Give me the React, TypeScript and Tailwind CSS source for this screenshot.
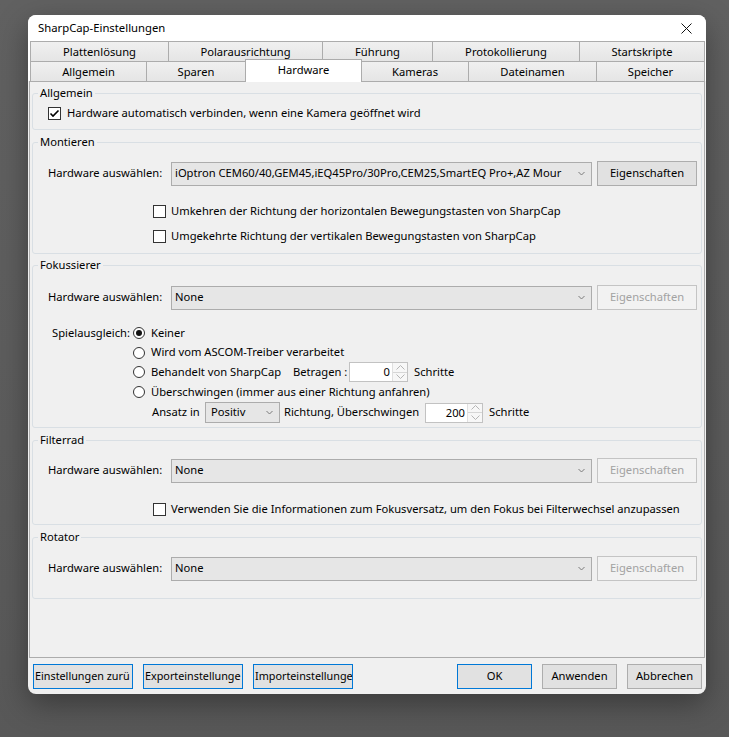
import React from "react";

function Chevron() {
  return (
    <svg width="7" height="5" viewBox="0 0 7 5" className="shrink-0">
      <path d="M0.5 1 L3.5 4 L6.5 1" fill="none" stroke="#7a7a7a" strokeWidth="1" />
    </svg>
  );
}

function Checkbox({ checked }: { checked?: boolean }) {
  return (
    <div className="w-[13px] h-[13px] border border-[#333333] bg-white shrink-0 flex items-center justify-center">
      {checked && (
        <svg width="11" height="11" viewBox="0 0 11 11">
          <path d="M1.5 5.5 L4 8 L9.5 2.5" fill="none" stroke="#000" strokeWidth="1.6" />
        </svg>
      )}
    </div>
  );
}

function Radio({ checked }: { checked?: boolean }) {
  return (
    <div className="w-[12px] h-[12px] rounded-full border border-[#333333] bg-white shrink-0 flex items-center justify-center">
      {checked && <div className="w-[6px] h-[6px] rounded-full bg-[#111111]" />}
    </div>
  );
}

function Combo({ text }: { text: string }) {
  return (
    <div className="h-[24px] w-[421px] shrink-0 border border-[#acacac] bg-[#e6e6e6] flex items-center pl-[3px] pr-[6px]">
      <span className="flex-1 overflow-hidden whitespace-nowrap">{text}</span>
      <div className="w-[8px]" />
      <Chevron />
    </div>
  );
}

function PropButton({ enabled }: { enabled?: boolean }) {
  return enabled ? (
    <div className="ml-[5px] h-[25px] w-[100px] shrink-0 border border-[#adadad] bg-[#e1e1e1] flex items-center justify-center text-black">
      Eigenschaften
    </div>
  ) : (
    <div className="ml-[5px] h-[25px] w-[100px] shrink-0 border border-[#c4c4c4] bg-[#f2f2f2] flex items-center justify-center text-[#a2a2a2]">
      Eigenschaften
    </div>
  );
}

function HwRow({ text, enabled, mt }: { text: string; enabled?: boolean; mt: string }) {
  return (
    <div className={`flex items-center h-[25px] pl-[15px] ${mt}`}>
      <span className="w-[123px] shrink-0">Hardware auswählen:</span>
      <Combo text={text} />
      <PropButton enabled={enabled} />
    </div>
  );
}

function Spinner({ value, w }: { value: string; w: string }) {
  return (
    <div className={`h-[20px] ${w} shrink-0 border border-[#c2c2c2] bg-white flex items-stretch`}>
      <div className="flex-1 text-right pr-[2px] leading-[18px]">{value}</div>
      <div className="w-[15px] flex flex-col border-l border-[#e0e0e0] bg-[#f7f7f7]">
        <div className="flex-1 flex items-center justify-center border-b border-[#d6d6d6]">
          <svg width="9" height="5" viewBox="0 0 9 5">
            <path d="M0.5 4.5 L4.5 0.5 L8.5 4.5" fill="none" stroke="#b5b5b5" strokeWidth="1" />
          </svg>
        </div>
        <div className="flex-1 flex items-center justify-center">
          <svg width="9" height="5" viewBox="0 0 9 5">
            <path d="M0.5 0.5 L4.5 4.5 L8.5 0.5" fill="none" stroke="#b5b5b5" strokeWidth="1" />
          </svg>
        </div>
      </div>
    </div>
  );
}

function Group({ title, h, mt, children }: { title: string; h: string; mt: string; children: React.ReactNode }) {
  return (
    <fieldset className={`${h} ${mt} border border-[#d9dfe4] rounded-[3px] mx-[2px]`}>
      <legend className="ml-[5px] px-[2px] leading-[16px]">{title}</legend>
      {children}
    </fieldset>
  );
}

type Tab = { label: string; w: string; selected?: boolean };

const row1: Tab[] = [
  { label: "Plattenlösung", w: "w-[139px]" },
  { label: "Polarausrichtung", w: "w-[155px]" },
  { label: "Führung", w: "w-[111px]" },
  { label: "Protokollierung", w: "w-[148px]" },
  { label: "Startskripte", w: "w-[126px]" },
];

const row2: Tab[] = [
  { label: "Allgemein", w: "w-[117px]" },
  { label: "Sparen", w: "w-[100px]" },
  { label: "Hardware", w: "w-[117px]", selected: true },
  { label: "Kameras", w: "w-[108px]" },
  { label: "Dateinamen", w: "w-[129px]" },
  { label: "Speicher", w: "w-[109px]" },
];

export default function App() {
  return (
    <div className="w-[729px] h-[737px] overflow-hidden bg-[linear-gradient(180deg,#616161_0%,#5c5c5c_60%,#585858_100%)] pt-[15px] pl-[28px] font-['Noto_Sans',sans-serif] text-[11.2px] text-black whitespace-nowrap">
      <div className="w-[678px] h-[679px] rounded-[8px] overflow-hidden bg-[#f0f0f0] shadow-[0_10px_30px_rgba(0,0,0,0.35)] flex flex-col">
        {/* title bar */}
        <div className="h-[26px] bg-white flex items-center pl-[10px] pr-[14px] shrink-0">
          <span className="flex-1 leading-[16px] text-[11.3px]">SharpCap-Einstellungen</span>
          <svg width="11" height="11" viewBox="0 0 11 11">
            <path d="M0.5 0.5 L10.5 10.5 M10.5 0.5 L0.5 10.5" stroke="#111" strokeWidth="1" />
          </svg>
        </div>
        {/* tabs */}
        <div className="h-[40px] bg-white shrink-0 pl-[2px] flex flex-col">
          <div className="flex h-[21px]">
            {row1.map((t, i) => (
              <div
                key={t.label}
                className={`${t.w} ${i > 0 ? "-ml-px" : ""} h-[21px] border border-[#acacac] bg-[linear-gradient(180deg,#f0f0f0,#e5e5e5)] flex items-center justify-center leading-[16px]`}
              >
                {t.label}
              </div>
            ))}
          </div>
          <div className="flex items-end h-[19px] relative z-10">
            {row2.map((t, i) =>
              t.selected ? (
                <div
                  key={t.label}
                  className={`${t.w} -ml-px h-[23px] -mb-px border border-b-0 border-[#acacac] bg-white flex items-start justify-center pt-[2px] leading-[16px] relative z-10`}
                >
                  {t.label}
                </div>
              ) : (
                <div
                  key={t.label}
                  className={`${t.w} ${i > 0 ? "-ml-px" : ""} h-[20px] -mt-px border border-b-0 border-[#acacac] bg-[linear-gradient(180deg,#f0f0f0,#e5e5e5)] flex items-center justify-center leading-[16px]`}
                >
                  {t.label}
                </div>
              )
            )}
          </div>
        </div>
        {/* tab page */}
        <div className="flex-1 mx-[1px] border border-[#acacac] bg-[#f0f0f0] pt-[3px]">
          <Group title="Allgemein" h="h-[45px]" mt="mt-0">
            <div className="flex items-center h-[16px] mt-[4px] pl-[15px]">
              <Checkbox checked />
              <span className="ml-[6px] leading-[16px]">Hardware automatisch verbinden, wenn eine Kamera geöffnet wird</span>
            </div>
          </Group>

          <Group title="Montieren" h="h-[120px]" mt="mt-[4px]">
            <HwRow
              mt="mt-[11px]"
              enabled
              text="iOptron CEM60/40,GEM45,iEQ45Pro/30Pro,CEM25,SmartEQ Pro+,AZ Mour"
            />
            <div className="flex items-center h-[16px] mt-[17px] pl-[120px]">
              <Checkbox />
              <span className="ml-[5px]">Umkehren der Richtung der horizontalen Bewegungstasten von SharpCap</span>
            </div>
            <div className="flex items-center h-[16px] mt-[9px] pl-[120px]">
              <Checkbox />
              <span className="ml-[5px]">Umgekehrte Richtung der vertikalen Bewegungstasten von SharpCap</span>
            </div>
          </Group>

          <Group title="Fokussierer" h="h-[171px]" mt="mt-[3px]">
            <HwRow mt="mt-[12px]" text="None" />
            <div className="mt-[13px] flex flex-col">
              <div className="flex items-center h-[20px]">
                <span className="w-[100px] text-right pr-[3px]">Spielausgleich:</span>
                <Radio checked />
                <span className="ml-[6px]">Keiner</span>
              </div>
              <div className="flex items-center h-[19px] pl-[100px]">
                <Radio />
                <span className="ml-[6px]">Wird vom ASCOM-Treiber verarbeitet</span>
              </div>
              <div className="flex items-center h-[20px] pl-[100px]">
                <Radio />
                <span className="ml-[6px] w-[142px] shrink-0">Behandelt von SharpCap</span>
                <span className="w-[56px] shrink-0">Betragen :</span>
                <Spinner value="0" w="w-[59px]" />
                <span className="ml-[6px]">Schritte</span>
              </div>
              <div className="flex items-center h-[20px] pl-[100px]">
                <Radio />
                <span className="ml-[6px]">Überschwingen (immer aus einer Richtung anfahren)</span>
              </div>
              <div className="flex items-center h-[21px] pl-[119px]">
                <span className="w-[53px] shrink-0">Ansatz in</span>
                <div className="w-[75px] h-[21px] border border-[#acacac] bg-[#e6e6e6] flex items-center pl-[5px] pr-[6px] shrink-0">
                  <span className="flex-1">Positiv</span>
                  <Chevron />
                </div>
                <span className="ml-[4px] w-[141px] shrink-0">Richtung, Überschwingen</span>
                <Spinner value="200" w="w-[58px]" />
                <span className="ml-[6px]">Schritte</span>
              </div>
            </div>
          </Group>

          <Group title="Filterrad" h="h-[93px]" mt="mt-[4px]">
            <HwRow mt="mt-[10px]" text="None" />
            <div className="flex items-center h-[16px] mt-[18px] pl-[120px]">
              <Checkbox />
              <span className="ml-[5px]">
                Verwenden Sie die Informationen zum Fokusversatz, um den Fokus bei Filterwechsel anzupassen
              </span>
            </div>
          </Group>

          <Group title="Rotator" h="h-[70px]" mt="mt-[4px]">
            <HwRow mt="mt-[11px]" text="None" />
          </Group>
        </div>
        {/* footer */}
        <div className="h-[36px] shrink-0 flex items-start pt-[6px] pl-[5px] pr-[4px] gap-[10px]">
          {["Einstellungen zurü", "Exporteinstellunge", "Importeinstellunge"].map((t) => (
            <div
              key={t}
              className="w-[100px] h-[25px] border border-[#0078d7] bg-[#e1e1e1] flex items-center pl-[1px] overflow-hidden whitespace-nowrap text-[10.8px]"
            >
              {t}
            </div>
          ))}
          <div className="flex-1" />
          <div className="w-[75px] h-[25px] border border-[#0078d7] bg-[#e1e1e1] flex items-center justify-center">OK</div>
          <div className="w-[75px] h-[25px] border border-[#adadad] bg-[#e1e1e1] flex items-center justify-center">Anwenden</div>
          <div className="w-[75px] h-[25px] border border-[#adadad] bg-[#e1e1e1] flex items-center justify-center">Abbrechen</div>
        </div>
      </div>
    </div>
  );
}
